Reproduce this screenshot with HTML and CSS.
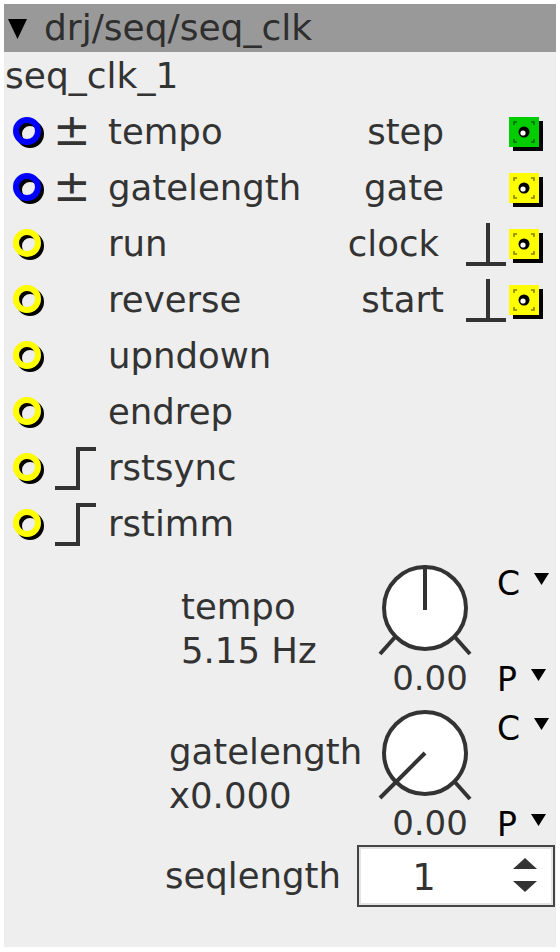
FILE: index.html
```html
<!DOCTYPE html>
<html>
<head>
<meta charset="utf-8">
<link rel="stylesheet" href="styles.css">
</head>
<body>
<div class="obj">
  <div class="title"><svg class="title-tri" width="20" height="22" viewBox="0 0 20 22"><polygon points="0,1 19,1 9.5,21" fill="#000"/></svg><span class="title-text">drj/seq/seq_clk</span></div>
  <div class="inst">seq_clk_1</div>

  <div class="io">
    <div class="inlets">
      <div class="row">
        <svg class="inlet" width="40" height="40" viewBox="0 0 40 40"><circle cx="20" cy="22" r="11" fill="none" stroke="#000" stroke-width="6"/><circle cx="17" cy="19" r="11" fill="none" stroke="#0000ff" stroke-width="6"/></svg>
        <span class="sym">±</span><span class="lbl">tempo</span>
      </div>
      <div class="row">
        <svg class="inlet" width="40" height="40" viewBox="0 0 40 40"><circle cx="20" cy="22" r="11" fill="none" stroke="#000" stroke-width="6"/><circle cx="17" cy="19" r="11" fill="none" stroke="#0000ff" stroke-width="6"/></svg>
        <span class="sym">±</span><span class="lbl">gatelength</span>
      </div>
      <div class="row">
        <svg class="inlet" width="40" height="40" viewBox="0 0 40 40"><circle cx="20" cy="22" r="11" fill="none" stroke="#000" stroke-width="6"/><circle cx="17" cy="19" r="11" fill="none" stroke="#ffff00" stroke-width="6"/></svg>
        <span class="sym"></span><span class="lbl">run</span>
      </div>
      <div class="row">
        <svg class="inlet" width="40" height="40" viewBox="0 0 40 40"><circle cx="20" cy="22" r="11" fill="none" stroke="#000" stroke-width="6"/><circle cx="17" cy="19" r="11" fill="none" stroke="#ffff00" stroke-width="6"/></svg>
        <span class="sym"></span><span class="lbl">reverse</span>
      </div>
      <div class="row">
        <svg class="inlet" width="40" height="40" viewBox="0 0 40 40"><circle cx="20" cy="22" r="11" fill="none" stroke="#000" stroke-width="6"/><circle cx="17" cy="19" r="11" fill="none" stroke="#ffff00" stroke-width="6"/></svg>
        <span class="sym"></span><span class="lbl">upndown</span>
      </div>
      <div class="row">
        <svg class="inlet" width="40" height="40" viewBox="0 0 40 40"><circle cx="20" cy="22" r="11" fill="none" stroke="#000" stroke-width="6"/><circle cx="17" cy="19" r="11" fill="none" stroke="#ffff00" stroke-width="6"/></svg>
        <span class="sym"></span><span class="lbl">endrep</span>
      </div>
      <div class="row">
        <svg class="inlet" width="40" height="40" viewBox="0 0 40 40"><circle cx="20" cy="22" r="11" fill="none" stroke="#000" stroke-width="6"/><circle cx="17" cy="19" r="11" fill="none" stroke="#ffff00" stroke-width="6"/></svg>
        <svg class="sym-icon" width="58" height="56" viewBox="0 0 58 56"><path d="M5 48 H28 V9 H46" fill="none" stroke="#333" stroke-width="4"/></svg><span class="lbl">rstsync</span>
      </div>
      <div class="row">
        <svg class="inlet" width="40" height="40" viewBox="0 0 40 40"><circle cx="20" cy="22" r="11" fill="none" stroke="#000" stroke-width="6"/><circle cx="17" cy="19" r="11" fill="none" stroke="#ffff00" stroke-width="6"/></svg>
        <svg class="sym-icon" width="58" height="56" viewBox="0 0 58 56"><path d="M5 48 H28 V9 H46" fill="none" stroke="#333" stroke-width="4"/></svg><span class="lbl">rstimm</span>
      </div>
    </div>

    <div class="outlets">
      <div class="row">
        <span class="olbl">step</span><span class="osym"></span>
        <svg class="outlet" width="40" height="56" viewBox="0 0 40 56"><rect x="7" y="17" width="30" height="30" fill="#000"/><rect x="3" y="13" width="30" height="30" fill="#00cc00"/><path d="M8 21 V18 H11 M25 18 H28 V21 M8 35 V38 H11 M25 38 H28 V35" fill="none" stroke="#000" stroke-opacity="0.5" stroke-width="1.5"/><circle cx="18" cy="28" r="5.5" fill="#000"/><circle cx="17" cy="29" r="2.6" fill="#fff"/></svg>
      </div>
      <div class="row">
        <span class="olbl">gate</span><span class="osym"></span>
        <svg class="outlet" width="40" height="56" viewBox="0 0 40 56"><rect x="7" y="17" width="30" height="30" fill="#000"/><rect x="3" y="13" width="30" height="30" fill="#ffff00"/><path d="M8 21 V18 H11 M25 18 H28 V21 M8 35 V38 H11 M25 38 H28 V35" fill="none" stroke="#000" stroke-opacity="0.5" stroke-width="1.5"/><circle cx="18" cy="28" r="5.5" fill="#000"/><circle cx="17" cy="29" r="2.6" fill="#fff"/></svg>
      </div>
      <div class="row">
        <span class="olbl olbl-clock">clock</span>
        <svg class="osym" width="62" height="56" viewBox="0 0 62 56"><path d="M22 48 H62 M44 48 V7" fill="none" stroke="#333" stroke-width="4"/></svg>
        <svg class="outlet" width="40" height="56" viewBox="0 0 40 56"><rect x="7" y="17" width="30" height="30" fill="#000"/><rect x="3" y="13" width="30" height="30" fill="#ffff00"/><path d="M8 21 V18 H11 M25 18 H28 V21 M8 35 V38 H11 M25 38 H28 V35" fill="none" stroke="#000" stroke-opacity="0.5" stroke-width="1.5"/><circle cx="18" cy="28" r="5.5" fill="#000"/><circle cx="17" cy="29" r="2.6" fill="#fff"/></svg>
      </div>
      <div class="row">
        <span class="olbl">start</span>
        <svg class="osym" width="62" height="56" viewBox="0 0 62 56"><path d="M22 48 H62 M44 48 V7" fill="none" stroke="#333" stroke-width="4"/></svg>
        <svg class="outlet" width="40" height="56" viewBox="0 0 40 56"><rect x="7" y="17" width="30" height="30" fill="#000"/><rect x="3" y="13" width="30" height="30" fill="#ffff00"/><path d="M8 21 V18 H11 M25 18 H28 V21 M8 35 V38 H11 M25 38 H28 V35" fill="none" stroke="#000" stroke-opacity="0.5" stroke-width="1.5"/><circle cx="18" cy="28" r="5.5" fill="#000"/><circle cx="17" cy="29" r="2.6" fill="#fff"/></svg>
      </div>
    </div>
  </div>

  <div class="param param-tempo">
    <div class="plabel"><div>tempo</div><div>5.15 Hz</div></div>
    <div class="knob">
      <svg width="100" height="100" viewBox="0 0 100 100"><circle cx="50" cy="53" r="41" fill="#fff" stroke="#333" stroke-width="4"/><path d="M50 10 V55" stroke="#333" stroke-width="4"/><path d="M5 99 L21 81 M79 81 L95 99" stroke="#333" stroke-width="4"/></svg>
      <div class="kval">0.00</div>
    </div>
    <div class="cp">
      <div class="cpi">C<svg class="dd" width="15" height="13" viewBox="0 0 15 13"><polygon points="0,0 15,0 7.5,12" fill="#000"/></svg></div>
      <div class="cpi">P<svg class="dd" width="15" height="13" viewBox="0 0 15 13"><polygon points="0,0 15,0 7.5,12" fill="#000"/></svg></div>
    </div>
  </div>

  <div class="param param-gate">
    <div class="plabel"><div>gatelength</div><div>x0.000</div></div>
    <div class="knob">
      <svg width="100" height="100" viewBox="0 0 100 100"><circle cx="50" cy="53" r="41" fill="#fff" stroke="#333" stroke-width="4"/><path d="M50 53 L5 98" stroke="#333" stroke-width="4"/><path d="M79 81 L95 99" stroke="#333" stroke-width="4"/></svg>
      <div class="kval">0.00</div>
    </div>
    <div class="cp">
      <div class="cpi">C<svg class="dd" width="15" height="13" viewBox="0 0 15 13"><polygon points="0,0 15,0 7.5,12" fill="#000"/></svg></div>
      <div class="cpi">P<svg class="dd" width="15" height="13" viewBox="0 0 15 13"><polygon points="0,0 15,0 7.5,12" fill="#000"/></svg></div>
    </div>
  </div>

  <div class="seq">
    <span class="seq-lbl">seqlength</span>
    <div class="spin">
      <span class="spin-val">1</span>
      <svg class="spin-arrows" width="24" height="36" viewBox="0 0 24 36"><polygon points="12,0 24,11 0,11" fill="#333"/><polygon points="0,23 24,23 12,34" fill="#333"/></svg>
    </div>
  </div>
</div>
</body>
</html>
```

FILE: styles.css
```css
html, body {
  margin: 0;
  padding: 0;
  background: #ffffff;
}

body {
  padding: 4px;
  font-family: "DejaVu Sans", sans-serif;
  color: #333333;
}

.obj {
  width: 552px;
  height: 943px;
  background: #eeeeee;
  box-sizing: border-box;
}

.title {
  height: 48px;
  background: #999999;
  display: flex;
  align-items: center;
  font-size: 36px;
  line-height: 48px;
  color: #2e2e2e;
}

.title-tri {
  margin-left: 4px;
  margin-right: 16px;
  margin-top: 2px;
}

.inst {
  height: 52px;
  font-size: 36px;
  line-height: 48px;
  padding-left: 1px;
}

.io {
  display: flex;
  justify-content: space-between;
  padding-right: 10px;
}

.row {
  height: 56px;
  display: flex;
  align-items: center;
  font-size: 35.5px;
  line-height: 56px;
}

.inlet {
  margin-left: 6px;
  flex: none;
}

.sym {
  width: 55px;
  padding-left: 3px;
  flex: none;
  font-size: 45px;
  line-height: 52px;
  align-self: flex-start;
}

.sym-icon {
  flex: none;
  display: block;
}

.lbl {
  white-space: nowrap;
}

.outlets .row {
  justify-content: flex-end;
}

.olbl {
  white-space: nowrap;
}

.olbl-clock {
  margin-right: 5px;
}

.osym {
  width: 62px;
  height: 56px;
  flex: none;
  display: block;
  overflow: visible;
}

.outlet {
  flex: none;
  display: block;
  overflow: visible;
}

.param {
  height: 145px;
  display: flex;
}

.plabel {
  width: 371px;
  box-sizing: border-box;
  font-size: 35.5px;
  line-height: 44px;
  padding-top: 33px;
  white-space: nowrap;
}

.param-tempo .plabel {
  padding-left: 177px;
}

.param-gate .plabel {
  padding-left: 165px;
}

.knob {
  width: 100px;
  padding-top: 3px;
  display: flex;
  flex-direction: column;
  align-items: center;
}

.knob svg {
  display: block;
  overflow: visible;
}

.kval {
  font-size: 34px;
  line-height: 36px;
  margin-top: 5px;
  padding-left: 10px;
}

.cp {
  margin-left: 22px;
  padding-top: 15px;
  height: 130px;
  display: flex;
  flex-direction: column;
  justify-content: space-between;
}

.cpi {
  font-size: 33px;
  line-height: 34px;
  color: #000000;
  display: flex;
  align-items: flex-start;
}

.dd {
  margin-left: 14px;
  margin-top: 6px;
}

.seq {
  height: 68px;
  display: flex;
  align-items: center;
  padding-left: 161px;
}

.seq-lbl {
  font-size: 35.5px;
  line-height: 44px;
  width: 192px;
  white-space: nowrap;
}

.spin {
  width: 198px;
  height: 62px;
  box-sizing: border-box;
  border: 2px solid #444444;
  background: #ffffff;
  box-shadow: inset 0 0 0 2px #e4e4e4;
  display: flex;
  align-items: center;
}

.spin-val {
  width: 130px;
  text-align: center;
  font-size: 37px;
  line-height: 44px;
  margin-top: 4px;
}

.spin-arrows {
  margin-left: 24px;
  display: block;
}
```
